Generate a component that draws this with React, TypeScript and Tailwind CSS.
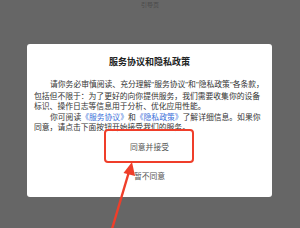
export default function App() {
  const font = { fontFamily: '"Noto Sans CJK SC", "Noto Sans", sans-serif' };
  const q = "font-['Liberation_Sans',sans-serif]";
  return (
    <div className="relative w-[300px] h-[228px] overflow-hidden bg-[#666666]" style={font}>
      {/* page behind the overlay */}
      <div className="h-[44px] flex justify-center pt-[1px] text-[6px] leading-[8px] text-[#4a4a4a]">引导页</div>

      {/* dialog */}
      <div className="ml-[27px] w-[245px] h-[153px] rounded-[3px] bg-white flex flex-col">
        <div className="h-[24px] pt-[12px] text-center text-[9px] leading-[12px] font-bold text-[#222]">服务协议和隐私政策</div>
        <div className="mt-[11px] px-[7px] text-[7.8px] leading-[10.5px] text-[#333] whitespace-nowrap">
          <div className="pl-[16px]">
            请你务必审慎阅读、充分理解<span className={q}>"</span>服务协议<span className={q}>"</span>和<span className={q}>"</span>隐私政策<span className={q}>"</span>各条款，
          </div>
          <div>包括但不限于：为了更好的向你提供服务，我们需要收集你的设备</div>
          <div>标识、操作日志等信息用于分析、优化应用性能。</div>
          <div className="pl-[16px]">
            你可阅读<span className="text-[#3a6fd9]">《服务协议》</span>和<span className="text-[#3a6fd9]">《隐私政策》</span>了解详细信息。如果你
          </div>
          <div>同意，请点击下面按钮开始接受我们的服务。</div>
        </div>
        <div className="mt-[5px] flex flex-col items-center text-[7.8px] text-[#555]">
          <button className="h-[18px] leading-[18px]">同意并接受</button>
          <button className="mt-[11px] h-[18px] leading-[18px]">暂不同意</button>
        </div>
      </div>

      {/* annotation: red box and arrow */}
      <div className="absolute left-[104px] top-[129px] w-[90px] h-[34px] rounded-[4px] border-2 border-[#ef3e2a]" />
      <svg className="absolute left-0 top-0" width="300" height="228" viewBox="0 0 300 228">
        <line x1="112" y1="229" x2="129.5" y2="170" stroke="#ef3e2a" strokeWidth="2.4" />
        <polygon points="132,162 123.5,173 135,176" fill="#ef3e2a" />
      </svg>
    </div>
  );
}
